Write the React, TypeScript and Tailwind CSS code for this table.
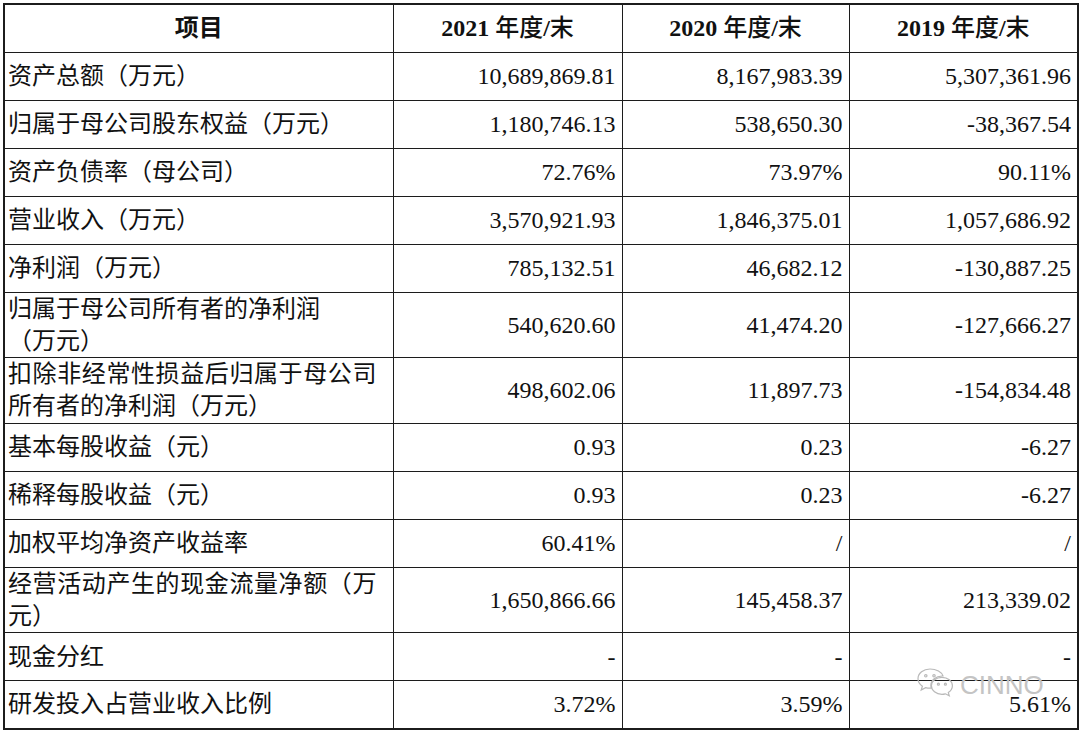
import React from "react";

type Row = {
  label: React.ReactNode;
  values: [string, string, string];
  tall?: boolean;
};

const ROWS: Row[] = [
  { label: "资产总额（万元）", values: ["10,689,869.81", "8,167,983.39", "5,307,361.96"] },
  { label: "归属于母公司股东权益（万元）", values: ["1,180,746.13", "538,650.30", "-38,367.54"] },
  { label: "资产负债率（母公司）", values: ["72.76%", "73.97%", "90.11%"] },
  { label: "营业收入（万元）", values: ["3,570,921.93", "1,846,375.01", "1,057,686.92"] },
  { label: "净利润（万元）", values: ["785,132.51", "46,682.12", "-130,887.25"] },
  {
    label: (
      <>
        归属于母公司所有者的净利润
        <br />
        （万元）
      </>
    ),
    values: ["540,620.60", "41,474.20", "-127,666.27"],
    tall: true,
  },
  {
    label: (
      <>
        <span className="tracking-[0.6px]">扣除非经常性损益后归属于母公司</span>
        <br />
        所有者的净利润（万元）
      </>
    ),
    values: ["498,602.06", "11,897.73", "-154,834.48"],
    tall: true,
  },
  { label: "基本每股收益（元）", values: ["0.93", "0.23", "-6.27"] },
  { label: "稀释每股收益（元）", values: ["0.93", "0.23", "-6.27"] },
  { label: "加权平均净资产收益率", values: ["60.41%", "/", "/"] },
  {
    label: (
      <>
        <span className="tracking-[0.6px]">经营活动产生的现金流量净额（万</span>
        <br />
        元）
      </>
    ),
    values: ["1,650,866.66", "145,458.37", "213,339.02"],
    tall: true,
  },
  { label: "现金分红", values: ["-", "-", "-"] },
  { label: "研发投入占营业收入比例", values: ["3.72%", "3.59%", "5.61%"] },
];

const YEARS = ["2021", "2020", "2019"];

function WeChatMark() {
  return (
    <svg width="38" height="38" viewBox="0 0 38 38" fill="none" stroke="#b9b9b9" strokeWidth="1.2">
      <path d="M14 3C7.4 3 2 7.3 2 12.7c0 3 1.7 5.7 4.4 7.5L5.2 24l4.4-2.4c1.4.4 2.9.6 4.4.6.5 0 1 0 1.4-.1-.3-.9-.5-1.9-.5-2.9 0-5.1 5-9.2 11.2-9.2h.9C25.8 6.1 20.4 3 14 3z" />
      <path d="M25.9 11.3c-5.8 0-10.5 3.8-10.5 8.5s4.7 8.5 10.5 8.5c1.2 0 2.4-.2 3.5-.5l3.9 2.1-1-3.3c2.5-1.6 4.1-4 4.1-6.8 0-4.7-4.7-8.5-10.5-8.5z" />
      <circle cx="9.8" cy="9.8" r="1.2" />
      <circle cx="18" cy="9.8" r="1.2" />
      <circle cx="22.4" cy="18.2" r="1" />
      <circle cx="29.4" cy="18.2" r="1" />
    </svg>
  );
}

export default function App() {
  return (
    <div className="relative h-[733px] w-[1080px] overflow-hidden bg-white pl-[3px] pt-[3px] font-['Liberation_Serif','Noto_Sans_CJK_SC',serif] text-[24px] text-[#111]">
      <table className="w-[1074px] table-fixed border-collapse border-2 border-[#1c1c1c]">
        <colgroup>
          <col className="w-[389px]" />
          <col className="w-[229px]" />
          <col className="w-[227px]" />
          <col className="w-[229px]" />
        </colgroup>
        <thead>
          <tr className="h-[48px]">
            <th className="border border-[#1c1c1c] p-0 text-center align-middle font-semibold">项目</th>
            {YEARS.map((y) => (
              <th key={y} className="border border-[#1c1c1c] p-0 text-center align-middle">
                <span className="font-bold">{y}</span>
                <span className="font-medium"> 年度</span>
                <span className="font-bold">/</span>
                <span className="font-medium">末</span>
              </th>
            ))}
          </tr>
        </thead>
        <tbody>
          {ROWS.map((row, i) => (
            <tr key={i} className={row.tall ? "h-[65.5px]" : "h-[48px]"}>
              <td className="border border-[#1c1c1c] py-0 pl-[3px] pr-0 align-middle leading-[32px]">{row.label}</td>
              {row.values.map((v, j) => (
                <td key={j} className="border border-[#1c1c1c] py-0 pl-0 pr-[6px] text-right align-middle leading-[32px]">
                  {v}
                </td>
              ))}
            </tr>
          ))}
        </tbody>
      </table>

      <div className="pointer-events-none absolute left-[916px] top-[666px] flex items-center gap-[6px]">
        <WeChatMark />
        <span className="font-['Liberation_Sans',sans-serif] text-[26px] font-light leading-none text-[#c4c4c4]">CINNO</span>
      </div>
    </div>
  );
}
